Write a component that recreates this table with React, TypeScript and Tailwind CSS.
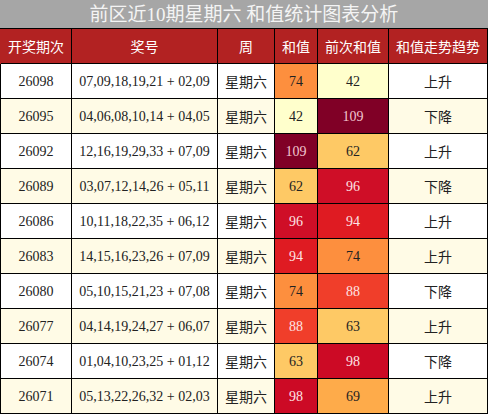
import React from "react";

type Row = { id: string; nums: string; sum: number; prev: number; trend: string };

const rows: Row[] = [
  { id: "26098", nums: "07,09,18,19,21 + 02,09", sum: 74, prev: 42, trend: "上升" },
  { id: "26095", nums: "04,06,08,10,14 + 04,05", sum: 42, prev: 109, trend: "下降" },
  { id: "26092", nums: "12,16,19,29,33 + 07,09", sum: 109, prev: 62, trend: "上升" },
  { id: "26089", nums: "03,07,12,14,26 + 05,11", sum: 62, prev: 96, trend: "下降" },
  { id: "26086", nums: "10,11,18,22,35 + 06,12", sum: 96, prev: 94, trend: "上升" },
  { id: "26083", nums: "14,15,16,23,26 + 07,09", sum: 94, prev: 74, trend: "上升" },
  { id: "26080", nums: "05,10,15,21,23 + 07,08", sum: 74, prev: 88, trend: "下降" },
  { id: "26077", nums: "04,14,19,24,27 + 06,07", sum: 88, prev: 63, trend: "上升" },
  { id: "26074", nums: "01,04,10,23,25 + 01,12", sum: 63, prev: 98, trend: "下降" },
  { id: "26071", nums: "05,13,22,26,32 + 02,03", sum: 98, prev: 69, trend: "上升" },
];

const colorClass: Record<number, string> = {
  42: "bg-[#ffffcc] text-[#222]",
  62: "bg-[#fec965] text-[#222]",
  63: "bg-[#fec965] text-[#222]",
  69: "bg-[#feab4a] text-[#222]",
  74: "bg-[#fd8f3e] text-[#222]",
  88: "bg-[#f03e2a] text-[#fde4e4]",
  94: "bg-[#df1b22] text-[#fde4e4]",
  96: "bg-[#cf0e27] text-[#fde4e4]",
  98: "bg-[#cc0a25] text-[#fde4e4]",
  109: "bg-[#800026] text-[#f2c6cf]",
};

const font = { fontFamily: '"Liberation Serif", "Noto Sans CJK SC", serif' };
const cjk = { fontFamily: '"Noto Sans CJK SC", sans-serif' };

export default function App() {
  return (
    <div className="w-[488px] h-[415px] bg-white overflow-hidden" style={font}>
      <div
        className="h-[29px] bg-[#a6a6a6] border-b border-black flex items-center justify-center text-[19px] text-[#f4f4f4] leading-none"
      >
        前区近10期星期六 和值统计图表分析
      </div>
      <div className="flex h-[35px] bg-[#b22222] text-white text-[14px] border-l border-[#b22222]" style={cjk}>
        {[
          ["开奖期次", "w-[71px]"],
          ["奖号", "w-[146px]"],
          ["周", "w-[57px]"],
          ["和值", "w-[43px]"],
          ["前次和值", "w-[71px]"],
          ["和值走势趋势", "w-[99px]"],
        ].map(([t, w]) => (
          <div key={t} className={`${w} flex items-center justify-center border-r border-b border-black`}>
            {t}
          </div>
        ))}
      </div>
      {rows.map((r, i) => {
        const bg = i % 2 === 0 ? "bg-white" : "bg-[#fffbe6]";
        return (
          <div key={r.id} className={`flex h-[35px] border-l border-black text-[14px] text-[#222] ${bg}`}>
            <div className="w-[71px] flex items-center justify-center border-r border-b border-black">{r.id}</div>
            <div className="w-[146px] flex items-center justify-center border-r border-b border-black">{r.nums}</div>
            <div className="w-[57px] flex items-center justify-center border-r border-b border-black" style={cjk}>星期六</div>
            <div className={`w-[43px] flex items-center justify-center border-r border-b border-black ${colorClass[r.sum]}`}>{r.sum}</div>
            <div className={`w-[71px] flex items-center justify-center border-r border-b border-black ${colorClass[r.prev]}`}>{r.prev}</div>
            <div className="w-[99px] flex items-center justify-center border-r border-b border-black" style={cjk}>{r.trend}</div>
          </div>
        );
      })}
    </div>
  );
}
